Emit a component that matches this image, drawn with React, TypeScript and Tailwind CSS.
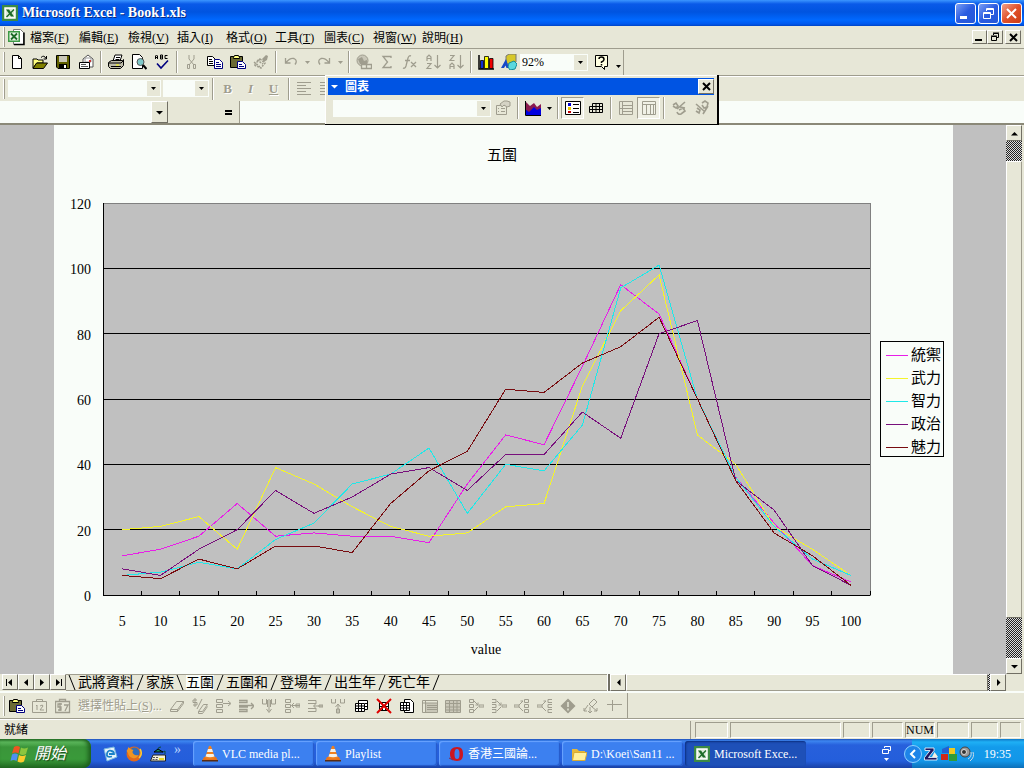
import { useState } from "react";
import type { ReactNode } from "react";

const G = "#9f9d8e";

// 16x16 toolbar glyphs
const glyphs: Record<string, ReactNode> = {
  new: <path d="M3.5 1.5h6l3 3v10h-9z M9.5 1.5v3h3" fill="#fff" stroke="#000" />,
  open: (
    <>
      <path d="M1 5h4l1 1h5v3H5l-4 5z" fill="#ffff80" stroke="#000" />
      <path d="M1 14.500 4.500 9h11l-4 5.500z" fill="#808000" stroke="#000" />
      <path d="M9 3.500q3-3 5 1M14.500 2v3h-3" fill="none" stroke="#000" />
    </>
  ),
  save: (
    <>
      <path d="M1.500 1.500h13v13H3l-1.500-1.500z" fill="#606000" stroke="#000" />
      <path d="M4 2h8v6H4z" fill="#c9c7b8" />
      <path d="M4 10h8v4H4z" fill="#000" />
      <path d="M9 11h2v3H9z" fill="#fff" />
    </>
  ),
  mail: (
    <>
      <path d="M5 5l5-4 5 4v8H5z" fill="#fff" stroke="#555" />
      <path d="M7 4h6v4H7z" fill="#fff" stroke="#999" />
      <path d="M11 6h2v2h-2z" fill="#c33" />
      <path d="M1.500 8.500h10v6h-10z" fill="#fff" stroke="#000" />
      <path d="M3 10.500h5M3 12.500h7" stroke="#555" />
    </>
  ),
  print: (
    <>
      <path d="M5 7l2-6h7l-2 6" fill="#fff" stroke="#000" />
      <path d="M.5 8.500l3-2h11l1-1v6l-3 3h-10l-2-2z" fill="#bdbba9" stroke="#000" />
      <path d="M1 9h12l2-2M3 12.500h10M8 3.500h4M7.500 5.500h4" stroke="#000" fill="none" />
      <path d="M8 10.500h3v1H8z" fill="#ff0" />
    </>
  ),
  preview: (
    <>
      <path d="M1.500 .5h7l3 3v11h-10z" fill="#fff" stroke="#000" />
      <circle cx="9.500" cy="8" r="3.500" fill="#7fc9c9" stroke="#555" />
      <path d="M12 11l3.500 4" stroke="#000" strokeWidth="2" />
    </>
  ),
  spell: (
    <>
      <path d="M1.500 5V2l1-1 1 1v3M1.500 3.500h2M6.500 5V1h2v4zM6.500 3h2M13.500 1.500H11v3h2.500" fill="none" stroke="#000" />
      <path d="M3 9.500l4 4.500 7-7.500" fill="none" stroke="#00007f" strokeWidth="1.600" />
    </>
  ),
  cut: (
    <>
      <path d="M5 1v4l5 6M10 1v4l-5 6" fill="none" stroke={G} />
      <path d="M3.500 10.500h2v4h-2zM9.500 10.500h2v4h-2z" fill="none" stroke={G} />
    </>
  ),
  copy: (
    <>
      <path d="M.5 2.500h5l3 3v6h-8z" fill="#fff" stroke="#000" />
      <path d="M2 5.500h3M2 7.500h4M2 9.500h4" stroke="#000" />
      <path d="M7.500 5.500h5l3 3v6h-8z" fill="#fff" stroke="#00007f" />
      <path d="M9 8.500h3M9 10.500h5M9 12.500h5" stroke="#00007f" />
    </>
  ),
  paste: (
    <>
      <path d="M.5 2.500h12v11H.5z" fill="#6b6b35" stroke="#000" />
      <path d="M3.500 3.500l1-2h4l1 2v1h-6z" fill="#ffff80" stroke="#000" />
      <path d="M7.500 7.500h5l3 3v4h-8z" fill="#fff" stroke="#00007f" />
      <path d="M9 10.500h3M9 12.500h5" stroke="#00007f" />
    </>
  ),
  painter: (
    <>
      <path d="M9 5l4-4 2 1-1 4-3 2z" fill={G} />
      <path d="M4 6l6 4M1 8l6 5M7 5l5 4-4 5-7-3z" fill="none" stroke={G} strokeWidth="1.500" strokeDasharray="2 1" />
    </>
  ),
  undo: <path d="M2.500 4v5h5M3 8.500q4-5 8-4 4 2 1 6" fill="none" stroke={G} strokeWidth="1.300" />,
  redo: <path d="M13.500 4v5h-5M13 8.500q-4-5-8-4-4 2-1 6" fill="none" stroke={G} strokeWidth="1.300" />,
  link: (
    <>
      <circle cx="6.500" cy="6.500" r="5.500" fill="#c9c7b8" stroke={G} />
      <path d="M2 5l4-2 2 4 3-1v4H4z" fill={G} />
      <path d="M5.500 10.500h5v4h-5zM10.500 10.500h5v4h-5z" fill="#e7e7d7" stroke={G} strokeWidth="1.300" />
    </>
  ),
  sum: <path d="M12 4V2.500H4L8.500 8 4 13.500h8V12" fill="none" stroke={G} strokeWidth="1.300" />,
  fx: <path d="M9 2q-2-1-3 2L4 12q-1 3-3 2M3 6.500h5M9 8l5 5M14 8l-5 5" fill="none" stroke={G} strokeWidth="1.300" />,
  az: <path d="M2 7V3l2-2 2 2v4M2 4.500h4M2 9.500h4L2 14.500h4.500M12.500 1v12M9.500 11l3 3 3-3" fill="none" stroke={G} strokeWidth="1.200" />,
  za: <path d="M2 1.500h4L2 6.500h4.500M2 15v-4l2-2 2 2v4M2 12.500h4M12.500 1v12M9.500 11l3 3 3-3" fill="none" stroke={G} strokeWidth="1.200" />,
  chart: (
    <>
      <path d="M1 1v14h15" fill="none" stroke="#000" strokeWidth="1.500" />
      <path d="M2.500 6.500h3v8h-3z" fill="#1030d0" stroke="#000" strokeWidth=".8" />
      <path d="M6.500 2.500h4v12h-4z" fill="#ffff00" stroke="#000" strokeWidth=".8" />
      <path d="M11.500 4.500h3.500v10h-3.500z" fill="#f00000" stroke="#000" strokeWidth=".8" />
    </>
  ),
  draw: (
    <>
      <path d="M5 2l3-2h7v8l-3 2H5z" fill="#d6c728" stroke="#777" />
      <path d="M0 14L5 5l3 9H5.500l-1-2.500-1.500 2.500z" fill="#1648c8" />
      <path d="M8 9l5-2 3 3-2 5-5 1-2-3z" fill="#5ad8de" stroke="#168b98" />
    </>
  ),
  help: (
    <>
      <path d="M1.500 1.500h12v11h-3v3l-3-3h-6z" fill="#ffffe1" stroke="#000" />
      <path d="M5 5q0-2 2.500-2T10 5.500Q10 7 7.500 8v1M7.500 10v1.500" fill="none" stroke="#000" strokeWidth="1.500" />
    </>
  ),
  lines: <path d="M1 1.500h14M1 4.500h9M1 7.500h14M1 10.500h9M1 13.500h14" stroke={G} />,
  props: (
    <>
      <path d="M1.500 5.500h10v9h-10zM3 8.500h1M6 8.500h4M3 11.500h1M6 11.500h4" fill="none" stroke={G} />
      <path d="M5 4l4-3h3l3 1v4l-3 1-3-2-2 2z" fill="#d5d3c5" stroke={G} />
    </>
  ),
  area: (
    <>
      <path d="M0 1l5 5 4-3 3 4 4-3v11H0z" fill="#8b1a4e" />
      <path d="M0 9l4 3 5-5 3 3 4-2v7H0z" fill="#0000e0" />
      <path d="M.5 1v14.500H16" fill="none" stroke="#000" />
    </>
  ),
  legend: (
    <>
      <path d="M.5 1.500h15v13H.5z" fill="#fff" stroke="#000" />
      <path d="M3 3h3v3H3z" fill="#0000d0" />
      <path d="M3 7h3v3H3z" fill="#e8c800" />
      <path d="M3 11h3v2H3z" fill="#c00000" />
      <path d="M8 4.500h6M8 8.500h6M8 12.500h6" stroke="#000" />
    </>
  ),
  dataTable: <path d="M4.500 3.500h10v9H1.500v-6h13M4.500 3.500v9M8 3.500v9M11.500 3.500v9M1.500 9.500h13" fill="none" stroke="#000" />,
  byRow: <path d="M1.500 1.500h13v13h-13zM4.500 1.500v13M4.500 5.500h10M1.500 8.500h13M4.500 11.500h10" fill="none" stroke={G} />,
  byCol: <path d="M1.500 1.500h13v13h-13zM1.500 4.500h13M5.500 4.500v10M9.500 4.500v10M12.500 4.500v10" fill="none" stroke={G} />,
  angleDown: <path d="M2 5l3-2 2 3-2 2-3-2M6 9l8-7M6 12q1 3 4 2l4-3-2-3-4 2M9 7l5 1" fill="none" stroke={G} strokeWidth="1.600" />,
  angleUp: <path d="M2 4l8 7M3 8l3 2-1 3-3-2M8 3l3-2 3 2-1 4-3 1-2-3M14 6l-5 8" fill="none" stroke={G} strokeWidth="1.600" />,
  paste12: <path d="M.5 3.500h14v11H.5zM4.500 3.500v-2h6v2M4 8l1-1v5M8 8q3-2 3 0l-3 4h4" fill="none" stroke={G} />,
  paste7: <path d="M.5 3.500h14v11H.5zM4.500 3.500v-2h6v2M7 6H3v3h3v3H3M5 5v8M9 7h4l-3 6" fill="none" stroke={G} strokeWidth="1.300" />,
  eraser: <path d="M1.500 11.500l6-8h7l-6 8zM8.500 11.500v2l6-8v-2M1.500 11.500v2h7" fill="none" stroke={G} />,
  eraser2: <path d="M5 2H1v2.500h4V7H1M3 0v9M10 1L5 11M6.500 13.500l5-7h4l-5 7zM6.500 13.500v2h4l5-7" fill="none" stroke={G} />,
  insRow: <path d="M1.500 1.500h6v3h-6zM1.500 6.500h6v3h-6zM1.500 11.500h6v3h-6zM8 5.500h7M13 3l3 2.500L13 8" fill="none" stroke={G} />,
  insCell: <path d="M1 2.500h8v2H1M1 13.500h8v-2H1M1 7.500h14M1 9h9M13 5l3 3-3 3" fill="none" stroke={G} strokeWidth="1.300" />,
  insCol: <path d="M1.500 1v5h4V1M10.500 1v5h4V1M8 1v12M5.500 11L8 14.500l2.500-3.500M6.500 2v7M9.500 2v7" fill="none" stroke={G} />,
  delRow: <path d="M1.500 1.500h5v3h-5zM1.500 6.500h5v3h-5zM1.500 11.500h5v3h-5zM16 7.500H8M10 5L7.500 7.500 10 10M12 6h4v3h-4z" fill="none" stroke={G} />,
  delCell: <path d="M1 2.500h8v3H1M1 13.500h8v-3H1M16 8H7M9 5.500L6.500 8 9 10.500M12 7h4v2h-4z" fill="none" stroke={G} />,
  delCol: <path d="M1.500 1v4h4V1M10.500 1v4h4V1M8 15V6M5.500 9L8 6l2.500 3M6.500 11h3v4h-3z" fill="none" stroke={G} />,
  sheets: (
    <>
      <path d="M5.500 2.500h9v9h-9z" fill="#fff" stroke="#000" />
      <path d="M2.500 5.500h9v8h-9zM2.500 8h9M2.500 10.500h9M5.500 5v9M8.500 5v9M12 5.500h3M12 8.500h3" fill="#fff" stroke="#000" />
    </>
  ),
  delSheet: (
    <>
      <path d="M3.500 4.500h9v8h-9zM3.500 8.500h9M6.500 4v9M9.500 4v9" fill="#fff" stroke="#000" />
      <path d="M1 1l14 14M15 1L1 15" stroke="#e00000" strokeWidth="2" />
    </>
  ),
  copySheet: (
    <>
      <path d="M5.500 1.500h6l3 3v10h-9z" fill="#fff" stroke="#000" />
      <path d="M1.500 4.500h9v8h-9zM1.500 7.500h9M1.500 10h9M4.500 4v9M7.500 4v9" fill="#fff" stroke="#000" />
    </>
  ),
  grid1: (
    <>
      <path d="M4 5h11v9H4z" fill="#c9c7b8" />
      <path d="M.5 2.500h15v12H.5zM.5 5h15M3.500 3v11M5 7.500h10M5 9.500h10M5 11.500h10" fill="none" stroke={G} />
    </>
  ),
  grid2: <path d="M.5 2.500h15v12H.5zM1 5.500h15M1 9h15M1 12h15M4.500 3v11M8.500 3v11M12 3v11" fill="#c9c7b8" stroke={G} />,
  trace1: <path d="M1.500 1.500h4v3h-4zM1.500 6.500h4v3h-4zM1.500 11.500h4v3h-4zM6 3l4 4M6 13l4-4M10 4.500V7H7.500M11 7h5v2h-5z" fill="none" stroke={G} />,
  trace2: <path d="M1 1.500h4v3H1M1 6.500h4v3H1M1 11.500h4v3H1M6 3l4 4M6 13l4-4M10 4.500V7H7.500M11 7h5v2h-5z" fill="none" stroke={G} />,
  trace3: <path d="M10.500 1.500h4v3h-4zM10.500 6.500h4v3h-4zM10.500 11.500h4v3h-4zM5 7l4-4H6.500M5 9l4 4M0 7h5v2H0z" fill="none" stroke={G} />,
  trace4: <path d="M15 1.500h-4v3h4M15 6.500h-4v3h4M15 11.500h-4v3h4M5 7l4-4H6.500M5 9l4 4M0 7h5v2H0z" fill="none" stroke={G} />,
  diamond: (
    <>
      <path d="M8 .5L15.500 8 8 15.500.5 8z" fill={G} />
      <path d="M8 4v5M8 10.500v2" stroke="#e7e7d7" strokeWidth="1.500" />
    </>
  ),
  detach: <path d="M6 6l5-5 3 3-5 5zM5 7l-4 6M1 10v3h3M9 9l5 4M14 10v3h-3M7 9v6M5 13l2 2 2-2" fill="none" stroke={G} />,
  cross: <path d="M6.500 2v11M1 6.500h15" fill="none" stroke={G} />,
};

const Glyph = ({ name }: { name: string }) => (
  <svg width="16" height="16" viewBox="0 0 16 16" className="shrink-0">
    {glyphs[name]}
  </svg>
);

const Tool = ({ name, label, pressed }: { name: string; label: string; pressed?: boolean }) => (
  <button
    aria-label={label}
    className={`flex h-[22px] w-[23px] shrink-0 items-center justify-center ${
      pressed ? "border border-[#9f9d8e] border-r-white border-b-white bg-[#f1f1e6]" : ""
    }`}
  >
    <Glyph name={name} />
  </button>
);

const Sep = () => <div className="mx-[3px] h-[22px] w-px shrink-0 bg-[#9f9d8e] shadow-[1px_0_0_#fff]" />;
const Handle = () => <div className="mr-[3px] ml-[3px] h-5 w-[2px] shrink-0 border-r border-[#9f9d8e] bg-white" />;

const Arrow = ({ color = "#000", dir = "down" }: { color?: string; dir?: "down" | "up" | "left" | "right" }) => {
  const d = {
    down: "M1 3h7L4.500 6.500z",
    up: "M1 6.500h7L4.500 3z",
    left: "M6.500 1v7L3 4.500z",
    right: "M3 1v7l3.500-3.500z",
  }[dir];
  return (
    <svg width="9" height="9" viewBox="0 0 9 9" className="shrink-0">
      <path d={d} fill={color} />
    </svg>
  );
};

const SmallArrow = ({ label, color = "#000" }: { label: string; color?: string }) => (
  <button aria-label={label} className="flex h-[22px] w-[10px] shrink-0 items-center justify-center">
    <svg width="5" height="3" viewBox="0 0 5 3">
      <path d="M0 0h5L2.500 3z" fill={color} />
    </svg>
  </button>
);

const Combo = ({ label, value, width }: { label: string; value: string; width: string }) => (
  <div className={`flex h-[17px] shrink-0 bg-[#f9fdf9] ${width}`}>
    <select aria-label={label} className="min-w-0 flex-1 appearance-none bg-transparent pl-[2px] text-[12px] leading-[14px] outline-none">
      <option>{value}</option>
    </select>
    <span className="m-px flex w-[13px] items-center justify-center bg-[#e7e7d7]">
      <svg width="5" height="3" viewBox="0 0 5 3">
        <path d="M0 0h5L2.500 3z" />
      </svg>
    </span>
  </div>
);

const ExcelLogo = () => (
  <svg width="16" height="16" viewBox="0 0 16 16" className="shrink-0">
    <path d="M0 0h16v16H0z" fill="#3c8a45" />
    <path d="M3 3h10v10H3z" fill="#dcebd8" stroke="#fff" strokeWidth="1.500" />
    <path d="M4 4.500h3l5 7H9z" fill="#1d6b28" />
    <path d="M12 4.500L4.500 12" stroke="#1d6b28" strokeWidth="1.500" />
  </svg>
);

const TitleBar = () => (
  <header className="flex h-[26px] items-center bg-[linear-gradient(#3c96ff_0px,#0a5ae8_4px,#0054e0_12px,#0068ff_20px,#0058ee_24px,#0044c4_26px)] pr-[2px] pl-[2px] text-white">
    <ExcelLogo />
    <h1 className="ml-1 flex-1 text-[14px] leading-4 font-bold [text-shadow:1px_1px_0_#0a2a80]">Microsoft Excel - Book1.xls</h1>
    <div className="flex gap-[2px]">
      <button aria-label="最小化" className="flex h-[21px] w-[21px] items-end rounded-[3px] border border-white bg-[linear-gradient(135deg,#7b9ff5,#2a5be0_50%,#2458d8)] p-1">
        <span className="h-[3px] w-[7px] bg-white" />
      </button>
      <button aria-label="還原" className="flex h-[21px] w-[21px] items-center justify-center rounded-[3px] border border-white bg-[linear-gradient(135deg,#7b9ff5,#2a5be0_50%,#2458d8)]">
        <svg width="13" height="13" viewBox="0 0 13 13" fill="none" stroke="#fff">
          <path d="M4.500 4V1.500h7v6H9M4.500 2.500h7M1.500 5.500h7v6h-7zM1.500 6.500h7" />
        </svg>
      </button>
      <button aria-label="關閉" className="flex h-[21px] w-[21px] items-center justify-center rounded-[3px] border border-white bg-[linear-gradient(135deg,#f0a08a,#e0512a_50%,#cc3c12)]">
        <svg width="13" height="13" viewBox="0 0 13 13" stroke="#fff" strokeWidth="2">
          <path d="M2 2l9 9M11 2l-9 9" />
        </svg>
      </button>
    </div>
  </header>
);

const menus = [
  ["檔案", "F"],
  ["編輯", "E"],
  ["檢視", "V"],
  ["插入", "I"],
  ["格式", "O"],
  ["工具", "T"],
  ["圖表", "C"],
  ["視窗", "W"],
  ["說明", "H"],
];

const MenuBar = () => (
  <nav className="flex h-[23px] items-center border-b border-[#9f9d8e] pr-[3px]">
    <Handle />
    <svg width="18" height="18" viewBox="0 0 18 18" className="mr-1 shrink-0">
      <path d="M5.500 1.500h7l3 3v12h-10z" fill="#fff" stroke="#777" />
      <path d="M6 16.500h10v-12" fill="none" stroke="#000" strokeWidth="1.500" />
      <path d="M0 3h12v11H0z" fill="#3c9a45" />
      <path d="M1.500 4.500h9v8h-9z" fill="#e9f4e6" />
      <path d="M3 5.500l6 6M9 5.500l-6 6" stroke="#1d6b28" strokeWidth="1.800" />
    </svg>
    <ul className="flex flex-1 gap-[10px]">
      {menus.map(([name, key]) => (
        <li key={key}>
          <button className="w-[39px] text-left text-[12px] leading-4 whitespace-nowrap">
            {name}(<u>{key}</u>)
          </button>
        </li>
      ))}
    </ul>
    <div className="flex">
      <button aria-label="最小化活頁簿" className="flex h-[14px] w-[15px] items-end border border-white border-r-[#716f64] border-b-[#716f64] p-[2px]">
        <span className="h-[2px] w-[7px] bg-black" />
      </button>
      <button aria-label="還原活頁簿" className="flex h-[14px] w-4 items-center justify-center border border-white border-r-[#716f64] border-b-[#716f64]">
        <svg width="10" height="10" viewBox="0 0 10 10" fill="none" stroke="#000">
          <path d="M3.500 3V1.500h5v4H7M3 1h6M1.500 4.500h5v4h-5zM1 4h6" />
        </svg>
      </button>
      <button aria-label="關閉活頁簿" className="ml-[2px] flex h-[14px] w-4 items-center justify-center border border-white border-r-[#716f64] border-b-[#716f64]">
        <svg width="9" height="9" viewBox="0 0 9 9" stroke="#000" strokeWidth="2">
          <path d="M1 1l7 7M8 1L1 8" />
        </svg>
      </button>
    </div>
  </nav>
);

const StandardToolbar = () => (
  <div className="flex h-[26px] items-center">
    <div className="flex h-[25px] items-center border-r border-[#9f9d8e]">
      <div className="-mr-[3px] flex">
        <Handle />
      </div>
      <Tool name="new" label="開新檔案" />
      <Tool name="open" label="開啟舊檔" />
      <Tool name="save" label="儲存檔案" />
      <Tool name="mail" label="電子郵件" />
      <Sep />
      <Tool name="print" label="列印" />
      <Tool name="preview" label="預覽列印" />
      <Tool name="spell" label="拼字檢查" />
      <Sep />
      <Tool name="cut" label="剪下" />
      <Tool name="copy" label="複製" />
      <Tool name="paste" label="貼上" />
      <Tool name="painter" label="複製格式" />
      <Sep />
      <Tool name="undo" label="復原" />
      <SmallArrow label="復原清單" color={G} />
      <Tool name="redo" label="取消復原" />
      <SmallArrow label="取消復原清單" color={G} />
      <Sep />
      <Tool name="link" label="插入超連結" />
      <Tool name="sum" label="自動加總" />
      <Tool name="fx" label="貼上函數" />
      <Tool name="az" label="遞增排序" />
      <Tool name="za" label="遞減排序" />
      <Sep />
      <Tool name="chart" label="圖表精靈" />
      <Tool name="draw" label="繪圖" />
      <Combo label="顯示比例" value="92%" width="w-[68px]" />
      <div className="w-[2px]" />
      <Tool name="help" label="說明" />
      <div className="flex pt-2">
        <SmallArrow label="其他按鈕" />
      </div>
    </div>
  </div>
);

const FormatToolbar = () => (
  <div className="flex h-[26px] items-center border-t border-[#9f9d8e] shadow-[inset_0_1px_0_#fff]">
    <Handle />
    <div className="flex items-center gap-[2px]">
      <Combo label="字型" value="" width="w-[153px]" />
      <Combo label="字型大小" value="" width="w-[46px]" />
    </div>
    <Sep />
    <button className="w-[23px] text-[13px] font-bold text-[#9f9d8e] [text-shadow:1px_1px_0_#fff]">B</button>
    <button className="w-[23px] text-[13px] font-bold text-[#9f9d8e] italic [text-shadow:1px_1px_0_#fff]">I</button>
    <button className="w-[23px] text-[13px] font-bold text-[#9f9d8e] underline [text-shadow:1px_1px_0_#fff]">U</button>
    <Sep />
    <Tool name="lines" label="靠左對齊" />
    <Tool name="lines" label="置中" />
  </div>
);

const FormulaBar = () => (
  <div className="flex h-6 border-b-2 border-[#8b8978]">
    <input aria-label="名稱方塊" className="w-[151px] bg-[#f9fdf9] px-1 text-[12px] outline-none" />
    <button aria-label="名稱清單" className="flex w-[17px] items-center justify-center border border-white border-r-[#716f64] border-b-[#716f64]">
      <Arrow />
    </button>
    <button aria-label="編輯公式" className="flex w-[72px] items-center justify-end border-r border-[#9f9d8e] pr-[7px]">
      <svg width="7" height="5" viewBox="0 0 7 5" shapeRendering="crispEdges">
        <path d="M0 0h7v2H0zM0 3h7v2H0z" />
      </svg>
    </button>
    <input aria-label="資料編輯列" className="min-w-0 flex-1 bg-[#f9fdf9] px-1 text-[12px] outline-none" />
  </div>
);

// Floating chart toolbar
const ChartToolbar = ({ onClose }: { onClose: () => void }) => (
  <section className="absolute top-[75px] left-[325px] z-10 w-[394px] border-r-2 border-b border-black bg-[#e7e7d7] p-[3px] shadow-[inset_1px_1px_0_#fff]">
    <div className="flex h-[17px] items-center bg-[#0054e3] pl-[2px] text-white">
      <Arrow color="#fff" />
      <h2 className="ml-[6px] flex-1 text-[12px] leading-4 font-bold">圖表</h2>
      <button aria-label="關閉" onClick={onClose} className="flex h-[15px] w-4 items-center justify-center border border-white border-r-[#716f64] border-b-[#716f64] bg-[#e7e7d7]">
        <svg width="9" height="9" viewBox="0 0 9 9" stroke="#000" strokeWidth="2">
          <path d="M1 1l7 7M8 1L1 8" />
        </svg>
      </button>
    </div>
    <div className="flex h-[26px] items-center pl-[5px]">
      <Combo label="圖表物件" value="" width="w-[158px]" />
      <Tool name="props" label="格式" />
      <Sep />
      <Tool name="area" label="圖表類型" />
      <SmallArrow label="圖表類型清單" />
      <Sep />
      <Tool name="legend" label="圖例" pressed />
      <Tool name="dataTable" label="資料表格" />
      <Sep />
      <Tool name="byRow" label="依列" />
      <Tool name="byCol" label="依欄" pressed />
      <Sep />
      <Tool name="angleDown" label="文字向下" />
      <Tool name="angleUp" label="文字向上" />
    </div>
  </section>
);

const series = [
  { name: "統禦", color: "#e81ee8", data: [12, 14, 18, 28, 18, 19, 18, 18, 16, 34, 49, 46, 70, 95, 86, 60, 36, 22, 9, 4] },
  { name: "武力", color: "#f4f42c", data: [20, 21, 24, 14, 39, 34, 27, 21, 18, 19, 27, 28, 64, 87, 98, 49, 40, 21, 14, 6] },
  { name: "智力", color: "#20e8e8", data: [6, 7, 10, 8, 17, 22, 34, 37, 45, 25, 40, 38, 52, 94, 101, 60, 36, 21, 11, 6] },
  { name: "政治", color: "#78107c", data: [8, 6, 14, 20, 32, 25, 30, 37, 39, 32, 43, 43, 56, 48, 80, 84, 35, 26, 9, 3] },
  { name: "魅力", color: "#780c10", data: [6, 5, 11, 8, 15, 15, 13, 28, 38, 44, 63, 62, 71, 76, 85, 60, 35, 19, 12, 3] },
];

const PLOT = { left: 49, right: 816, top: 78, bottom: 470 };
const step = (PLOT.right - PLOT.left) / 20;
const yOf = (v: number) => PLOT.bottom - (v * (PLOT.bottom - PLOT.top)) / 120;
const xOf = (i: number) => PLOT.left + step * (i + 0.5);

const StatsChart = () => (
  <svg viewBox="0 0 899 549" className="block w-full" role="img" aria-label="五圍">
    <text x="448" y="35" textAnchor="middle" fontSize="15">五圍</text>
    <g shapeRendering="crispEdges">
      <rect x={PLOT.left} y={PLOT.top} width={PLOT.right - PLOT.left} height={PLOT.bottom - PLOT.top} fill="#c0c0c0" stroke="#808080" />
      {[20, 40, 60, 80, 100].map((v) => (
        <path key={v} d={`M${PLOT.left} ${yOf(v)}H${PLOT.right}`} stroke="#000" />
      ))}
      <path d={`M${PLOT.left} ${PLOT.top}V${PLOT.bottom}H${PLOT.right}`} fill="none" stroke="#000" />
      {series[0].data.map((_, i) => (
        <path key={i} d={`M${PLOT.left + step * (i + 1)} ${PLOT.bottom}v-4`} stroke="#000" />
      ))}
      {series.map((s) => (
        <polyline key={s.name} points={s.data.map((v, i) => `${xOf(i)},${yOf(v)}`).join(" ")} fill="none" stroke={s.color} />
      ))}
    </g>
    {[0, 20, 40, 60, 80, 100, 120].map((v) => (
      <text key={v} x="37" y={yOf(v) + 6} textAnchor="end" fontSize="14">{v}</text>
    ))}
    {series[0].data.map((_, i) => (
      <text key={i} x={xOf(i)} y="501" textAnchor="middle" fontSize="14">{(i + 1) * 5}</text>
    ))}
    <text x="432" y="529" textAnchor="middle" fontSize="14">value</text>
    <g shapeRendering="crispEdges">
      <rect x="826" y="216" width="63" height="115" fill="#f9fdf9" stroke="#000" />
      {series.map((s, i) => (
        <path key={s.name} d={`M832 ${230 + i * 23}h22`} stroke={s.color} />
      ))}
    </g>
    {series.map((s, i) => (
      <text key={s.name} x="857" y={235 + i * 23} fontSize="15">{s.name}</text>
    ))}
  </svg>
);

const scrollButton = "flex items-center justify-center border border-white border-r-[#716f64] border-b-[#716f64] bg-[#e7e7d7]";
const dither = "bg-[conic-gradient(#222_25%,#ddd_0_50%,#222_0_75%,#ddd_0)] bg-[length:2px_2px]";

const Workspace = () => (
  <main className="flex flex-1 pr-[2px]">
    <div className="flex flex-1 bg-[#c0c0c0] pr-[53px] pl-[54px]">
      <div className="flex-1 bg-[#f9fdf9]">
        <StatsChart />
      </div>
    </div>
    <div className="flex w-4 shrink-0 flex-col">
      <button aria-label="向上捲動" className={`h-4 ${scrollButton}`}>
        <Arrow dir="up" />
      </button>
      <div className={`h-5 ${dither}`} />
      <div className="flex-1 border border-white border-r-[#9f9d8e] border-b-[#716f64]" />
      <div className={`h-10 ${dither}`} />
      <button aria-label="向下捲動" className={`h-4 ${scrollButton}`}>
        <Arrow />
      </button>
    </div>
  </main>
);

const NavArrow = ({ label, d }: { label: string; d: string }) => (
  <button aria-label={label} className={`h-4 w-4 shrink-0 ${scrollButton}`}>
    <svg width="10" height="9" viewBox="0 0 10 9">
      <path d={d} />
    </svg>
  </button>
);

const sheetNames = ["武將資料", "家族", "五圍", "五圍和", "登場年", "出生年", "死亡年"];

const Slash = ({ back }: { back?: boolean }) => (
  <svg width="10" height="15" viewBox="0 0 10 15" fill="none" stroke="#000" className="mx-px shrink-0">
    <path d={back ? "M2 0l6 15" : "M8 0L2 15"} />
  </svg>
);

const SheetTabs = () => {
  const [active, setActive] = useState("五圍");
  return (
    <div className="flex h-[17px] pr-[2px] pl-[2px]">
      <NavArrow label="第一張" d="M1 1h1v7H1zM7 1v7L3 4.500z" />
      <NavArrow label="上一張" d="M7 1v7L3 4.500z" />
      <NavArrow label="下一張" d="M3 1v7l4-3.500z" />
      <NavArrow label="最後一張" d="M8 1h1v7H8zM3 1v7l4-3.500z" />
      <div className="flex flex-1 items-center border-y border-[#9f9d8e]">
        <Slash back />
        {sheetNames.map((name) => (
          <div key={name} className="flex">
            <button
              onClick={() => setActive(name)}
              className={`text-[14px] leading-[15px] whitespace-nowrap ${name === active ? "bg-[#f9fdf9]" : ""}`}
            >
              {name}
            </button>
            <Slash back={name === "家族"} />
          </div>
        ))}
      </div>
      <div className="w-[3px] border-l border-white bg-[#716f64]" />
      <button aria-label="向左捲動" className={`w-4 ${scrollButton}`}>
        <Arrow dir="left" />
      </button>
      <div className="w-[362px] border border-white border-r-[#716f64] border-b-[#9f9d8e]" />
      <div className={`w-[2px] ${dither}`} />
      <button aria-label="向右捲動" className={`w-4 ${scrollButton}`}>
        <Arrow dir="right" />
      </button>
      <div className="w-4" />
    </div>
  );
};

const auditTools = [
  ["eraser", "清除"],
  ["eraser2", "清除格式"],
  ["insRow", "插入儲存格"],
  ["insCell", "插入列"],
  ["insCol", "插入欄"],
  ["delRow", "刪除儲存格"],
  ["delCell", "刪除列"],
  ["delCol", "刪除欄"],
  ["sheets", "插入工作表"],
  ["delSheet", "刪除工作表"],
  ["copySheet", "移動或複製工作表"],
  ["grid1", "選取目前範圍"],
  ["grid2", "選取可見儲存格"],
  ["trace1", "追蹤前導參照"],
  ["trace2", "移除前導參照"],
  ["trace3", "追蹤從屬參照"],
  ["trace4", "移除從屬參照"],
  ["diamond", "追蹤錯誤"],
  ["detach", "移除所有箭號"],
  ["cross", "凍結窗格"],
];

const EditToolbar = () => (
  <div className="flex h-7 items-center border-b border-[#9f9d8e] pt-[2px] shadow-[inset_0_2px_0_#f9fdf9]">
    <div className="flex h-[25px] items-center border-r border-[#9f9d8e] pr-[2px]">
      <div className="-mr-[3px] flex">
        <Handle />
      </div>
      <Tool name="paste" label="貼上" />
      <Tool name="paste12" label="貼上值" />
      <Tool name="paste7" label="貼上格式" />
      <button className="w-[91px] shrink-0 pl-1 text-left text-[12px] whitespace-nowrap text-[#9f9d8e] [text-shadow:1px_1px_0_#fff]">
        選擇性貼上(<u>S</u>)...
      </button>
      {auditTools.map(([name, label]) => (
        <Tool key={name} name={name} label={label} />
      ))}
    </div>
  </div>
);

const Panel = ({ width, text }: { width: string; text?: string }) => (
  <div className={`h-4 border border-[#9f9d8e] border-r-white border-b-white text-center text-[12px] leading-[15px] ${width}`}>{text}</div>
);

const StatusBar = () => (
  <footer className="flex h-5 items-center border-t border-white pr-[3px] pl-1 text-[12px]">
    <span className="flex-1">就緒</span>
    <div className="mr-1 h-[18px] w-px bg-[#9f9d8e]" />
    <div className="flex gap-[2px]">
      <Panel width="w-[33px]" />
      <Panel width="w-[111px]" />
      <Panel width="w-[27px]" />
      <Panel width="w-[31px]" />
      <Panel width="w-[30px]" text="NUM" />
      <Panel width="w-8" />
      <Panel width="w-[27px]" />
      <Panel width="w-[21px]" />
    </div>
  </footer>
);

const Cone = () => (
  <svg width="16" height="16" viewBox="0 0 16 16" className="shrink-0">
    <path d="M2 11h12l2 4H0z" fill="#e8731c" />
    <path d="M0 14h16v1.500H0z" fill="#5a2b10" />
    <path d="M7 0h2l4 12q-5 2-10 0z" fill="#f08020" />
    <path d="M6 3h4l1 3H5zM4.500 8h7l1 2.500q-4.500 1.500-9 0z" fill="#f4f1ea" />
  </svg>
);

const OperaLogo = () => (
  <svg width="16" height="16" viewBox="0 0 16 16" className="shrink-0">
    <path d="M9 1C4 1 2 4 2 8s2 7 7 7 6-3 6-7-1-7-6-7zm0 2c2 0 2.500 2 2.500 5S11 13 9 13s-2.500-2-2.500-5S7 3 9 3z" fill="#cc1620" fillRule="evenodd" />
    <path d="M1 12l4 2" stroke="#7b2d58" />
  </svg>
);

const FolderIcon = () => (
  <svg width="16" height="16" viewBox="0 0 16 16" className="shrink-0">
    <path d="M1 3h5l2 2h6v9H1z" fill="#e5b93a" />
    <path d="M3 6.500h13l-2 8H1.500z" fill="#fff09a" stroke="#d8ab32" />
  </svg>
);

const tasks = [
  { title: "VLC media pl...", icon: <Cone /> },
  { title: "Playlist", icon: <Cone /> },
  { title: "香港三國論...", icon: <OperaLogo /> },
  { title: "D:\\Koei\\San11 ...", icon: <FolderIcon /> },
  { title: "Microsoft Exce...", icon: <ExcelLogo />, active: true },
];

const Taskbar = () => (
  <div className="flex h-[29px] items-stretch bg-[linear-gradient(#1f4fb8_0px,#3d86f0_2px,#2760dc_6px,#245edb_22px,#1941a5_29px)] text-[12px] text-white">
    <button className="flex w-[91px] shrink-0 items-center gap-1 rounded-r-[8px] bg-[linear-gradient(#2c7a2c_0px,#5db95d_3px,#3a953a_8px,#3a9a3a_20px,#226b22_29px)] pl-[10px] text-[16px] italic shadow-[inset_-3px_0_4px_#1d5f1d] [text-shadow:1px_1px_1px_#1a4a1a]">
      <svg width="20" height="20" viewBox="0 0 20 20" className="shrink-0">
        <path d="M4 3q3-2 6 0L8.500 9.500q-3-2-6.500 0z" fill="#ee5522" />
        <path d="M11 3.500q3 2 7 0L16 10q-3.500 2-6.500 0z" fill="#8cc63e" />
        <path d="M2 10.500q3-2 6 0L6.500 17q-3-2-6 0z" fill="#4f90f0" />
        <path d="M9 11q3 2 7 0l-2 6.500q-3 2-6.500 0z" fill="#fccb2c" />
      </svg>
      開始
    </button>
    <div className="flex w-[102px] shrink-0 items-center gap-2 pl-[11px]">
      <button aria-label="Outlook Express">
        <svg width="16" height="16" viewBox="0 0 16 16">
          <path d="M2 3l10-2 3 10-10 4z" fill="#e6f3fb" stroke="#78b8e0" />
          <path d="M11 5.500q-5-2.500-6 2t5 3M7 8h5q0-3-3-3" fill="none" stroke="#1b82c8" strokeWidth="1.800" />
        </svg>
      </button>
      <button aria-label="Firefox">
        <svg width="16" height="16" viewBox="0 0 16 16">
          <circle cx="8" cy="8" r="7.500" fill="#e2681a" />
          <circle cx="8.500" cy="6.500" r="5" fill="#2e6dbd" />
          <path d="M.5 5Q2 3 2.500 1q2 3 5 3-2 2 0 4 2 2 5 1-2 4-6 3T2 7z" fill="#f09422" />
          <path d="M14 3q3 5-1 9" fill="none" stroke="#f8c838" strokeWidth="1.500" />
        </svg>
      </button>
      <button aria-label="Keyboard">
        <svg width="16" height="16" viewBox="0 0 16 16">
          <path d="M3 9h12.500v6H.5z" fill="#f3f1da" stroke="#222" />
          <path d="M3 11.500h6M2.500 13.500h6" stroke="#555" strokeDasharray="2 1" />
          <path d="M4 6l4-3 5 3z" fill="#168a5d" stroke="#000" />
          <path d="M8 3q0-2 3-2M13 6l2-1v3" fill="none" stroke="#0c4a38" />
          <path d="M9 12h5v2H9z" fill="#e8d820" />
        </svg>
      </button>
      <span className="mb-2 text-[14px] leading-[14px] text-[#b8d4ff]">»</span>
    </div>
    <div className="flex min-w-0 flex-1 items-center gap-[2px]">
      {tasks.map((t) => (
        <button
          key={t.title}
          className={`flex h-[25px] w-[121px] min-w-0 items-center gap-1 rounded-[3px] pl-[9px] whitespace-nowrap ${
            t.active ? "bg-[#1e50b8] shadow-[inset_1px_1px_2px_#0c2f80]" : "bg-[#3c80f0] shadow-[inset_1px_1px_1px_#6aa4ff,inset_-1px_-1px_1px_#2458c8]"
          }`}
        >
          {t.icon}
          {t.title}
        </button>
      ))}
    </div>
    <div className="flex w-[38px] shrink-0 flex-col items-center justify-center gap-1 pr-3">
      <svg width="9" height="8" viewBox="0 0 9 8" fill="none" stroke="#fff">
        <path d="M2.500 2V.5h6v4H7M.5 3.500h6v4h-6z" />
      </svg>
      <svg width="5" height="3" viewBox="0 0 5 3">
        <path d="M0 0h5L2.500 3z" fill="#fff" />
      </svg>
    </div>
    <div className="flex shrink-0 items-center gap-[2px] bg-[linear-gradient(#0f78c8_0px,#1fb0f5_3px,#139beb_8px,#1296e8_22px,#0d6fb8_29px)] pr-[13px]">
      <button aria-label="顯示隱藏圖示" className="-ml-2 flex h-[18px] w-[18px] items-center justify-center rounded-full border border-[#8fd0ff] bg-[#1e84e8]">
        <svg width="8" height="10" viewBox="0 0 8 10" fill="none" stroke="#fff" strokeWidth="2">
          <path d="M6 1L2 5l4 4" />
        </svg>
      </button>
      <svg width="15" height="14" viewBox="0 0 15 14">
        <path d="M1 1h9v2.500L4.500 10.500H13V13H.5v-2.500L6 3.500H1z" fill="#1d1860" stroke="#fff" strokeWidth=".8" />
        <path d="M10.500 5l3.500 5H8z" fill="#f5f0e0" />
      </svg>
      <svg width="16" height="16" viewBox="0 0 16 16">
        <path d="M1 3l7-3v7H1z" fill="#2460d0" />
        <path d="M8 2h6v6H8z" fill="#f0cc20" />
        <path d="M0 8h7v6H0z" fill="#d02818" />
        <path d="M8 8h8v7H8z" fill="#2f9c38" />
      </svg>
      <svg width="15" height="16" viewBox="0 0 15 16">
        <circle cx="6" cy="6" r="5" fill="#9a9a9a" stroke="#444" />
        <circle cx="5" cy="6" r="2.500" fill="#333" stroke="#ddd" />
        <path d="M9 13q4-2 3-7M11 15q5-4 3-9" fill="none" stroke="#c8d8e8" />
      </svg>
      <time className="ml-2">19:35</time>
    </div>
  </div>
);

export default function App() {
  const [showChartBar, setShowChartBar] = useState(true);

  return (
    <div className="relative flex min-h-screen w-full flex-col bg-[#e7e7d7] font-['Liberation_Serif','Noto_Sans_CJK_TC',serif] text-black">
      <TitleBar />
      <MenuBar />
      <StandardToolbar />
      <FormatToolbar />
      <FormulaBar />
      <Workspace />
      <SheetTabs />
      <EditToolbar />
      <StatusBar />
      <Taskbar />
      {showChartBar && <ChartToolbar onClose={() => setShowChartBar(false)} />}
    </div>
  );
}
